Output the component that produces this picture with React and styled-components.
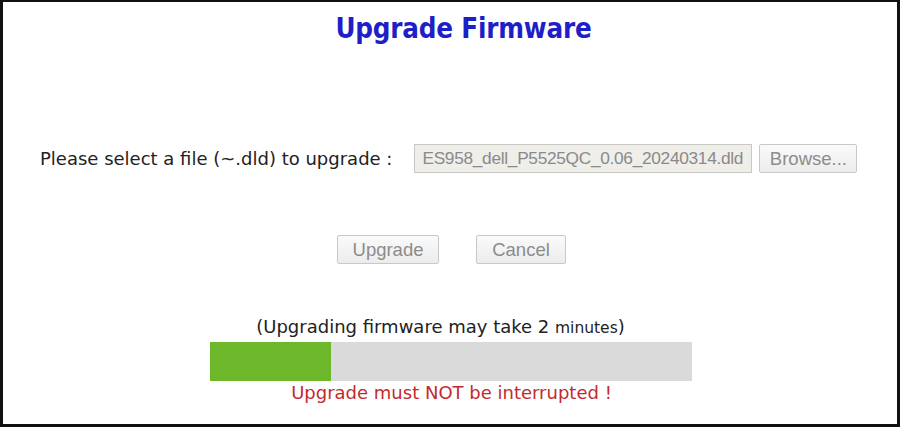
import React from "react";
import styled, { createGlobalStyle } from "styled-components";

const GlobalStyle = createGlobalStyle`
  html, body {
    margin: 0;
    padding: 0;
    background: #ffffff;
  }
`;

const Frame = styled.div`
  box-sizing: border-box;
  width: 900px;
  height: 427px;
  border: 3px solid #111;
  border-top-width: 2px;
  background: #fff;
  display: flex;
  flex-direction: column;
  font-family: "DejaVu Sans", Verdana, sans-serif;
  color: #222;
`;

const Title = styled.h1`
  margin: 11px 0 0;
  padding-left: 27px;
  text-align: center;
  font-family: "DejaVu Sans Condensed", "DejaVu Sans", sans-serif;
  font-weight: bold;
  font-size: 27.5px;
  line-height: 30px;
  color: #1f1fc8;
  letter-spacing: -0.2px;
`;

const FileRow = styled.div`
  display: flex;
  align-items: center;
  margin-top: 101px;
  padding-left: 37px;
  height: 29px;
`;

const Label = styled.span`
  font-size: 18px;
  color: #222;
  margin-right: 22px;
  white-space: nowrap;
`;

const FileInput = styled.div`
  box-sizing: border-box;
  width: 338px;
  height: 29px;
  border: 1px solid #c9c9c4;
  background: #efeee9;
  display: flex;
  align-items: center;
  padding-left: 7px;
  font-family: "Liberation Sans", Arial, sans-serif;
  font-size: 17.3px;
  color: #8a8a8a;
  white-space: nowrap;
  overflow: hidden;
  letter-spacing: -0.3px;
`;

const Button = styled.button`
  box-sizing: border-box;
  width: ${(p) => p.$w}px;
  height: 29px;
  border: 1px solid #c8c8c8;
  border-radius: 2px;
  background: linear-gradient(#fafafa, #ececec);
  font-family: "Liberation Sans", Arial, sans-serif;
  font-size: 18.5px;
  color: #8c8c8c;
  padding: 0;
  margin-left: ${(p) => p.$ml || 0}px;
`;

const ButtonRow = styled.div`
  display: flex;
  justify-content: center;
  margin-top: 62px;
  padding-left: 3px;
`;

const Note = styled.div`
  margin-top: 53px;
  text-align: center;
  font-size: 18px;
  line-height: 20px;
  color: #222;
  padding-right: 19px;
`;

const Small = styled.span`
  font-size: 15.5px;
`;

const Track = styled.div`
  width: 482px;
  height: 39px;
  margin: 4px auto 0;
  background: #dadada;
  display: flex;
  position: relative;
  left: 1px;
`;

const Fill = styled.div`
  height: 100%;
  background: #6cb82a;
`;

const Warning = styled.div`
  margin-top: 1px;
  text-align: center;
  font-size: 18px;
  line-height: 22px;
  color: #c32a2d;
  padding-left: 3px;
`;

export default function App() {
  const progress = 121 / 482;
  return (
    <>
      <GlobalStyle />
      <Frame>
        <Title>Upgrade Firmware</Title>
        <FileRow>
          <Label>Please select a file (~.dld) to upgrade :</Label>
          <FileInput>ES958_dell_P5525QC_0.06_20240314.dld</FileInput>
          <Button $w={98} $ml={7}>Browse...</Button>
        </FileRow>
        <ButtonRow>
          <Button $w={102}>Upgrade</Button>
          <Button $w={90} $ml={37}>Cancel</Button>
        </ButtonRow>
        <Note>
          (Upgrading firmware may take 2 <Small>minutes</Small>)
        </Note>
        <Track>
          <Fill style={{ width: `${progress * 100}%` }} />
        </Track>
        <Warning>Upgrade must NOT be interrupted !</Warning>
      </Frame>
    </>
  );
}
